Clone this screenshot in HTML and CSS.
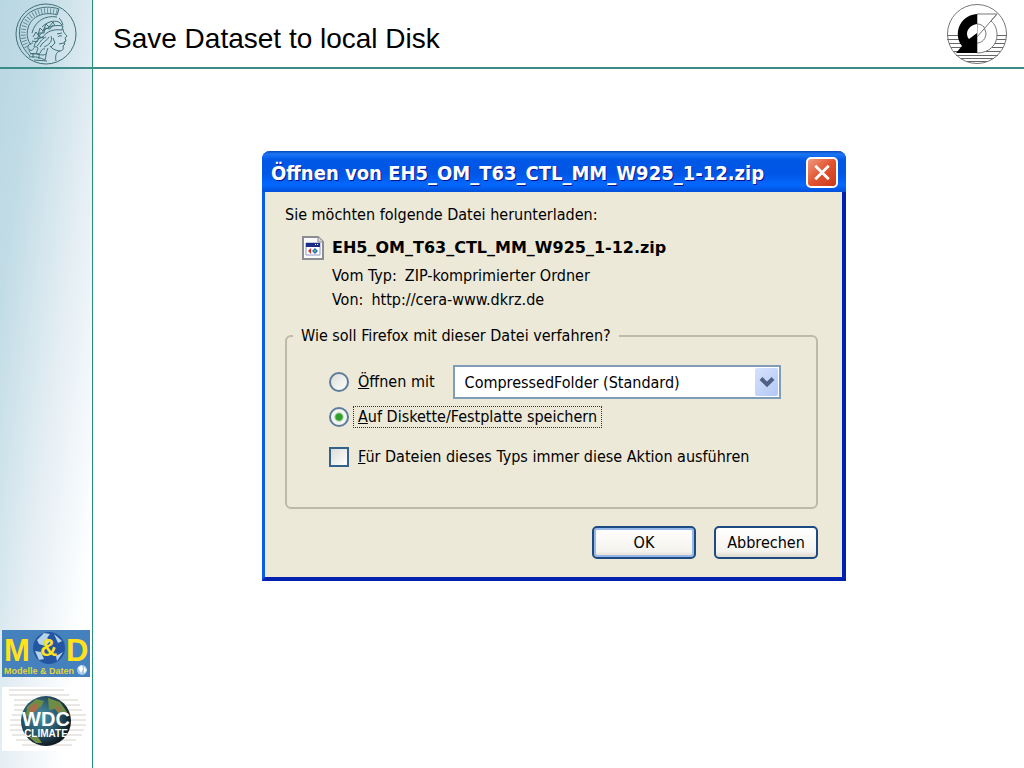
FILE: index.html
```
<!DOCTYPE html>
<html lang="de">
<head>
    <meta charset="UTF-8">
    <meta name="viewport" content="width=device-width, initial-scale=1.0">
    <title>Save Dataset to local Disk</title>
    <link rel="stylesheet" href="styles.css">
</head>
<body>
    <!-- Header -->
    <header class="slide-header">
        <div class="logo-box">
            <svg class="logo" viewBox="0 0 62 62" role="img" aria-label="Minerva" fill="none" stroke="#3f6f76">
                <circle cx="31" cy="31" r="30"/>
                <path d="M44 6C30 1 9 6 5 24c-2 12 2 21 10 29M42 12C30 8 16 13 13 25c-2 8 0 13 3 17M44 6l-2 6"/>
                <path stroke-width="5" stroke-dasharray="1 2" stroke-opacity=".7" d="M42 9C29 5 13 10 9 24c-2 9 0 15 4 22"/>
                <path d="M42 14C30 12 20 18 17 30M44 15c2 2 3 4 4 7M27 24c5-5 11-7 17-5l3 3M24 33c6-8 13-12 24-10l-1 4c-9-1-15 1-20 8z"/>
                <path d="M48 26c0 3 2 5 4 7 0 1-2 1-2 2l1 3-2 1 1 2-2 2c1 4-1 5-4 5-4-1-7-2-9-5M45 48c-4 1-5 5-4 10M33 45c-2 4-2 9-3 12M42 31l5-1M43 34c1-2 3-1 4-1M44 41l5-1"/>
                <path d="M18 34l3-5 2 3 2-7 3 3 3-7 3 3 4-5 2 4M19 36l4-1 1-5 5 0 1-5 5 1 3-4M17 38l5 1 2-4 5-1"/>
                <path d="M28 34c-5 1-8 5-9 10M31 34c-5 2-6 6-9 9M34 34c-2 4-7 5-9 10M36 33c2 5-2 9-7 11M38 35l2 5-4 4"/>
                <path d="M18 40c-5 0-7 6-3 7 4 2 3-5 7-3 3 2-3 6 1 7 4 0 2-6 7-5M14 47c0 4 5 5 8 3M15 51c5-2 12 3 16 0M14 54c6-1 12 1 16 3M18 50v5M24 51v5M19 57l13 1"/>
            </svg>
        </div>
        <h1 class="slide-title">Save Dataset to local Disk</h1>
        <svg class="logo" viewBox="0 0 62 62" role="img" aria-label="DKRZ">
            <path stroke="#666" d="M1 32.500h60M1 36.500h59M3 40.500h56M5 44.500h52M7 48.500h48M10 52.500h42M14 55.500h34M20 58.500h22"/>
            <path fill="#fff" stroke="#777" d="M31 11h20l-6 7c4 3 6 8 6 14 0 10-8 18-20 18z"/>
            <path fill="#fff" stroke="#777" d="M31 21c3 0 5 1 7 3l2 6c0 6-4 10-9 10zM31 34l20-23"/>
            <path fill="#fff" d="M21 31c0-6 4-10 10-10v19c-6 0-10-4-10-9z"/>
            <path fill="#000" d="M31 11v10c-6 1-10 5-10 10 0 2 1 4 2 5l8-6v20H10l6-7C7 32 13 12 31 11z"/>
            <circle cx="31" cy="31" r="29.500" fill="none" stroke="#777"/>
        </svg>
    </header>

    <!-- Sidebar -->
    <aside class="sidebar">
        <svg class="md-logo" viewBox="0 0 88 47" role="img" aria-label="Modelle &amp; Daten">
            <rect width="88" height="47" fill="#4581bd"/>
            <circle cx="47" cy="18" r="16" fill="#2455a2"/>
            <path fill="#b6d4e8" d="M35 10l7-7 6 1-3 4 4 3-6 5-6-2zM52 4l8 7-4 2zM33 21l6 1 3 7-5 1zM54 26l7-4-6 9z"/>
            <text class="md-letter" x="2" y="31">M</text>
            <text class="md-letter md-amp" x="38" y="26">&amp;</text>
            <text class="md-letter" x="64" y="31">D</text>
            <text class="md-caption" x="2" y="44">Modelle &amp; Daten</text>
            <circle cx="80" cy="40" r="5" fill="#a8cbed"/>
            <path fill="#fff" d="M76 38l4-3 1 4-2 4zM82 37l3 3-3 3z"/>
        </svg>
        <svg class="wdc-logo" viewBox="0 0 88 64" role="img" aria-label="WDC Climate">
            <defs>
                <radialGradient id="globe" cx=".4" cy=".4" r=".6">
                    <stop offset="0" stop-color="#4b90a8"/>
                    <stop offset=".6" stop-color="#285568"/>
                    <stop offset="1" stop-color="#101c24"/>
                </radialGradient>
            </defs>
            <rect width="88" height="64" fill="#fff"/>
            <path stroke="#d5cfc8" d="M7 3h55M7 8h60M12 13h64M12 18h66M12 23h68M10 28h74M8 33h76M8 38h76M8 43h74M10 48h70M14 53h60M20 58h50"/>
            <circle cx="44" cy="34" r="25" fill="url(#globe)"/>
            <path fill="#6d8c46" d="M25 20l9-8 8 2-3 6-6 3-2 8-7-2zM46 11l12 4 7 10-7 3-5-6-6 1zM27 50l9 0 4 6-6 0z"/>
            <path fill="#a86c48" d="M27 20l8-4 1 6-7 6zM53 18l6 4-3 4z"/>
            <text class="wdc-name" x="44" y="39">WDC</text>
            <text class="wdc-caption" x="44" y="50">CLIMATE</text>
        </svg>
    </aside>

    <!-- Download dialog -->
    <main class="content">
        <form class="dialog">
            <div class="dialog-bar">
                <h2 class="dialog-title">Öffnen von EH5_OM_T63_CTL_MM_W925_1-12.zip</h2>
                <button type="button" class="close-btn" aria-label="Schließen">
                    <svg viewBox="0 0 28 28"><path d="M7 7l14 14M21 7L7 21" stroke="#fff" stroke-width="3"/></svg>
                </button>
            </div>

            <div class="dialog-body">
                <p class="intro">Sie möchten folgende Datei herunterladen:</p>
                <div class="file">
                    <svg class="file-icon" viewBox="0 0 22 24">
                        <path d="M1 1h15l5 5v17H1z" fill="#fafafa" stroke="#8b8b92" stroke-width="2"/>
                        <path d="M16 1v5h5" fill="#ddd" stroke="#8b8b92"/>
                        <path d="M4 7h14v12H4z" fill="#fff" stroke="#8d9ac5"/>
                        <path d="M4 7h14v4H4z" fill="#182c88"/>
                        <path d="M13 8h1v1h-1zM15 8h1v1h-1z" fill="#fff"/>
                        <path d="M9 12v6l-3-3z" fill="#d92c25"/>
                        <path d="M10 15l3-3 3 3-3 3z" fill="#2c6ac3"/>
                        <path d="M12 14h2v2h-2z" fill="#50b46c"/>
                    </svg>
                    <div class="file-info">
                        <strong class="file-name">EH5_OM_T63_CTL_MM_W925_1-12.zip</strong>
                        <p class="file-row"><span>Vom Typ:</span><span>ZIP-komprimierter Ordner</span></p>
                        <p class="file-row"><span>Von:</span><span>http://cera-www.dkrz.de</span></p>
                    </div>
                </div>

                <fieldset class="actions">
                    <legend>Wie soll Firefox mit dieser Datei verfahren?</legend>
                    <div class="option open-option">
                        <input type="radio" name="action" id="open-with">
                        <label for="open-with"><u>Ö</u>ffnen mit</label>
                        <div class="program-box">
                            <select class="program" aria-label="Programm">
                                <option>CompressedFolder (Standard)</option>
                            </select>
                            <svg class="arrow" viewBox="0 0 23 27"><path d="M6 10l6 6 6-6" fill="none" stroke="#4d6185" stroke-width="4"/></svg>
                        </div>
                    </div>
                    <div class="option save-option">
                        <input type="radio" name="action" id="save" checked>
                        <label for="save" class="focused"><u>A</u>uf Diskette/Festplatte speichern</label>
                    </div>
                    <div class="option">
                        <input type="checkbox" id="always">
                        <label for="always"><u>F</u>ür Dateien dieses Typs immer diese Aktion ausführen</label>
                    </div>
                </fieldset>

                <div class="dialog-buttons">
                    <button type="button" class="btn btn-default">OK</button>
                    <button type="button" class="btn">Abbrechen</button>
                </div>
            </div>
        </form>
    </main>
</body>
</html>
```
FILE: styles.css
```
* {
    box-sizing: border-box;
}

body {
    margin: 0;
    min-height: 100vh;
    display: grid;
    grid-template-columns: 93px 1fr;
    grid-template-rows: 69px 1fr;
    background: linear-gradient(98deg, #b9d7e2, #c2dce6 22%, #e2edf3 52%, #ffffff 85%) left / 92px 100% no-repeat #fff;
    font-family: "Liberation Sans", Arial, sans-serif;
}

h1,
h2,
p {
    margin: 0;
    font-weight: normal;
}

/* Header */
.slide-header {
    grid-column: 1 / 3;
    display: flex;
    align-items: center;
    padding-right: 16px;
    border-bottom: 2px solid #3c8c88;
}

.logo-box {
    align-self: stretch;
    width: 93px;
    display: flex;
    align-items: center;
    justify-content: center;
    border-right: 1px solid #279078;
}

.logo {
    width: 62px;
    height: 62px;
}

.slide-title {
    flex: 1;
    padding: 10px 0 0 20px;
    font-size: 28px;
    line-height: 34px;
}

/* Sidebar */
.sidebar {
    display: flex;
    flex-direction: column;
    justify-content: flex-end;
    gap: 10px;
    padding: 0 2px 17px;
    border-right: 1px solid #279078;
}

.md-logo,
.wdc-logo {
    display: block;
    width: 88px;
}

.md-letter {
    fill: #ffe21c;
    font: bold 31px "Liberation Sans", sans-serif;
}

.md-amp {
    font-size: 24px;
}

.md-caption {
    fill: #e3d536;
    font: bold 9px "Liberation Sans", sans-serif;
}

.wdc-name,
.wdc-caption {
    fill: #fff;
    text-anchor: middle;
    font: bold 20px "Liberation Sans", sans-serif;
}

.wdc-caption {
    font-size: 10px;
}

/* Dialog */
.content {
    padding: 82px 178px 0 169px;
}

.dialog {
    border: solid #0831d9;
    border-color: #0a5be8 #0020b0 #0020b0 #0a5be8;
    border-width: 0 4px 4px 3px;
    border-radius: 8px 8px 0 0;
    background: #ece9d8;
    font: 16px "DejaVu Sans Condensed", "DejaVu Sans", sans-serif;
    color: #000;
}

.dialog-bar {
    display: flex;
    align-items: center;
    justify-content: space-between;
    height: 41px;
    margin: 0 -4px 0 -3px;
    padding: 2px 8px 0 9px;
    border-radius: 8px 8px 0 0;
    background: linear-gradient(#0848bb 0, #1c76f5 3px, #0058e6 9px, #0055e5 22px, #0468fe 34px, #0250d8 41px);
}

.dialog-title {
    color: #fff;
    font: bold 20px "DejaVu Sans Condensed", "DejaVu Sans", sans-serif;
    text-shadow: 1px 1px #0f1089;
    white-space: nowrap;
}

.close-btn {
    width: 32px;
    height: 31px;
    padding: 0;
    border: 2px solid #fff;
    border-radius: 5px;
    background: linear-gradient(135deg, #f09a80, #e2532f 50%, #c8391a);
}

.close-btn svg {
    display: block;
    width: 28px;
    height: 27px;
}

.dialog-body {
    padding: 12px 24px 18px 20px;
}

.intro {
    line-height: 22px;
}

.file {
    display: flex;
    gap: 8px;
    padding: 10px 0 0 17px;
}

.file-icon {
    width: 22px;
    height: 24px;
}

.file-name {
    display: block;
    margin-bottom: 4px;
    font-family: "DejaVu Sans", sans-serif;
    line-height: 24px;
}

.file-row {
    display: flex;
    gap: 8px;
    line-height: 24px;
}

.actions {
    margin: 13px 0 0;
    padding: 18px 35px 38px 42px;
    border: 2px solid #bdbaa9;
    border-radius: 6px;
}

.actions legend {
    margin-left: -36px;
    padding: 0 8px;
    line-height: 22px;
}

.option {
    display: flex;
    align-items: center;
    height: 24px;
}

.option label {
    padding: 0 4px;
    line-height: 20px;
    border: 1px solid transparent;
    white-space: nowrap;
}

.option .focused {
    border: 1px dotted #333;
}

.open-option {
    height: 34px;
}

.save-option {
    margin: 6px 0 16px;
}

input {
    appearance: none;
    width: 20px;
    height: 20px;
    margin: 0 4px 0 0;
    border: 2px solid #33638c;
    background: linear-gradient(135deg, #dcdcd7, #fff);
}

input[type="radio"] {
    border-radius: 50%;
    border-color: #5d7c9c;
}

input[type="radio"]:checked {
    background: radial-gradient(circle, #2fa12b 3px, #f4f4f1 5px);
}

.program-box {
    position: relative;
    flex: 1;
    margin-left: 13px;
}

.program {
    appearance: none;
    display: block;
    width: 100%;
    height: 34px;
    padding: 0 10px;
    border: 2px solid #7f9db9;
    background: #fff;
    font: inherit;
    color: #000;
}

.arrow {
    position: absolute;
    top: 3px;
    right: 3px;
    width: 23px;
    height: 28px;
    border-radius: 2px;
    background: linear-gradient(135deg, #d6e2fd, #b3c8f5);
    pointer-events: none;
}

.dialog-buttons {
    display: flex;
    justify-content: flex-end;
    gap: 18px;
    margin-top: 17px;
}

.btn {
    width: 104px;
    height: 33px;
    padding: 0;
    border: 2px solid #1d4a80;
    border-radius: 5px;
    background: linear-gradient(#fff, #f4f3ee 80%, #dcd8cc);
    font: inherit;
    color: #000;
}

.btn-default {
    box-shadow: inset 0 0 0 2px #98b8ea;
}
```
